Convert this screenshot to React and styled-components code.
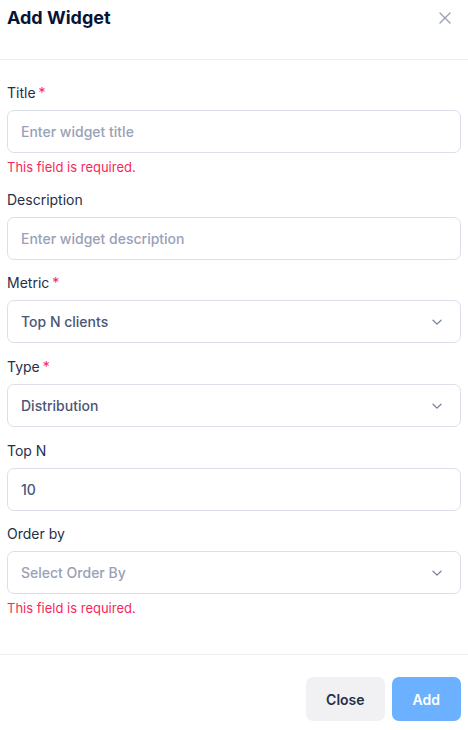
import React from "react";
import styled, { createGlobalStyle } from "styled-components";

const GlobalStyle = createGlobalStyle`
  html, body {
    margin: 0;
    padding: 0;
    background: #ffffff;
    font-family: Inter, "Noto Sans", sans-serif;
  }
  * { box-sizing: border-box; }
`

const Modal = styled.div`
  width: 468px;
  height: 730px;
  display: flex;
  flex-direction: column;
  background: #ffffff;
`
const Header = styled.div`
  height: 60px;
  display: flex;
  align-items: flex-start;
  justify-content: space-between;
  padding: 6px 17px 0 7px;
  border-bottom: 1px solid #eceef2;
`
const ModalTitle = styled.h2`
  margin: 0;
  font-size: 18px;
  line-height: 24px;
  font-weight: 700;
  color: #071437;
`
const CloseIcon = styled.button`
  border: none;
  background: none;
  padding: 0;
  margin-top: 6px;
  width: 12px;
  height: 12px;
  color: #99a1b7;
  cursor: pointer;
  display: flex;
`
const Body = styled.form`
  flex: 1;
  display: flex;
  flex-direction: column;
  gap: 13.7px;
  padding: 23px 7px 0 7px;
`
const Field = styled.div`
  display: flex;
  flex-direction: column;
`
const Label = styled.label`
  font-size: 14px;
  line-height: 20px;
  font-weight: 400;
  color: #252f4a;
  margin-bottom: 7px;
`
const Star = styled.span`
  color: #f8285a;
  margin-left: 3px;
`
const Box = styled.div`
  height: 43px;
  border: 1px solid #dbdfe9;
  border-radius: 7px;
  display: flex;
  align-items: center;
  justify-content: space-between;
  padding: 0 17px 0 13px;
  font-size: 14px;
  font-weight: 450;
  color: ${p => (p.$placeholder ? "#99a1b7" : "#4b5675")};
`
const Error = styled.div`
  margin-top: 5px;
  font-size: 13px;
  line-height: 18px;
  color: #f8285a;
`
const Footer = styled.div`
  border-top: 1px solid #eceef2;
  display: flex;
  justify-content: flex-end;
  gap: 7px;
  padding: 22px 7px 9px 7px;
`
const Button = styled.button`
  height: 44px;
  border: none;
  border-radius: 7px;
  font-family: inherit;
  font-size: 14px;
  font-weight: 600;
  padding: 0 ${p => p.$pad}px;
  background: ${p => (p.$primary ? "#6cb1ff" : "#f1f1f4")};
  color: ${p => (p.$primary ? "#ffffff" : "#252f4a")};
  cursor: pointer;
`

const Chevron = () => (
  <svg width="12" height="12" viewBox="0 0 12 12" fill="none">
    <path d="M2 4.3l4 3.8 4-3.8" stroke="#78829d" strokeWidth="1.3" strokeLinecap="round" strokeLinejoin="round" />
  </svg>
)

const fields = [
  { label: "Title", required: true, value: "Enter widget title", placeholder: true, error: true },
  { label: "Description", value: "Enter widget description", placeholder: true },
  { label: "Metric", required: true, value: "Top N clients", select: true },
  { label: "Type", required: true, value: "Distribution", select: true },
  { label: "Top N", value: "10" },
  { label: "Order by", value: "Select Order By", placeholder: true, select: true, error: true },
]

function App() {
  return (
    <Modal>
      <GlobalStyle />
      <Header>
        <ModalTitle>Add Widget</ModalTitle>
        <CloseIcon aria-label="close">
          <svg width="12" height="12" viewBox="0 0 12 12" fill="none">
            <path d="M1 1l10 10M11 1L1 11" stroke="currentColor" strokeWidth="1.4" strokeLinecap="round" />
          </svg>
        </CloseIcon>
      </Header>
      <Body>
        {fields.map(f => (
          <Field key={f.label}>
            <Label>
              {f.label}
              {f.required && <Star>*</Star>}
            </Label>
            <Box $placeholder={f.placeholder}>
              <span>{f.value}</span>
              {f.select && <Chevron />}
            </Box>
            {f.error && <Error>This field is required.</Error>}
          </Field>
        ))}
      </Body>
      <Footer>
        <Button type="button" $pad={20}>Close</Button>
        <Button type="button" $primary $pad={21}>Add</Button>
      </Footer>
    </Modal>
  );
}

export default App;
